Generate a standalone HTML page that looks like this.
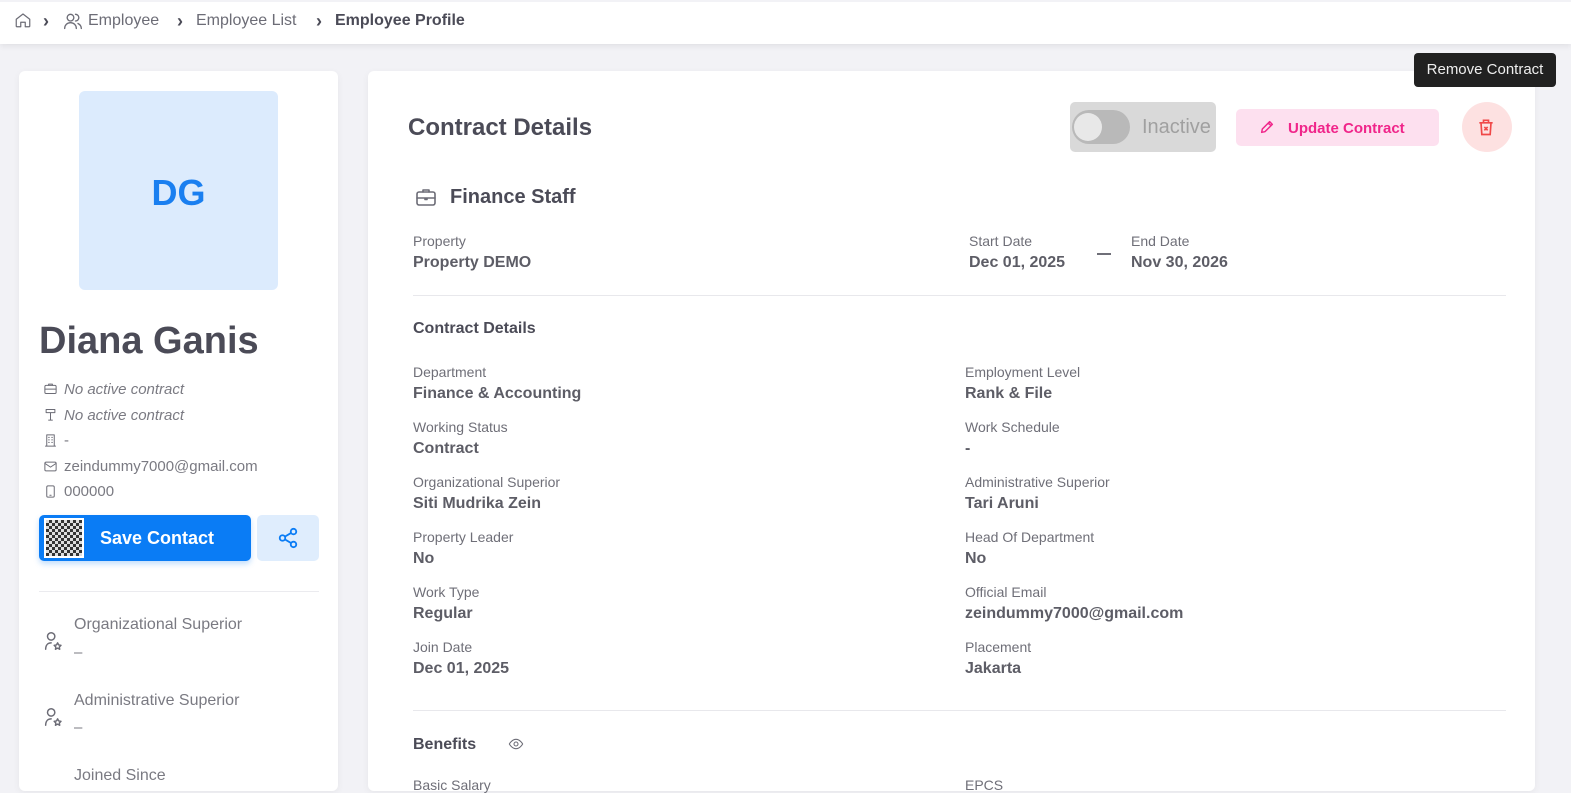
<!DOCTYPE html>
<html><head><meta charset="utf-8"><style>
*{box-sizing:border-box;margin:0;padding:0}
body{width:1571px;height:783px;overflow:hidden;background:#f2f2f6;font-family:"Liberation Sans",sans-serif;color:#4b4b57;position:relative}
.a{position:absolute}
.hdr{left:0;top:0;width:1571px;height:44px;background:#fff;box-shadow:0 2px 6px rgba(0,0,0,.08);border-top:2px solid #f2f2f6}
.bc{top:12px;font-size:16px;color:#6c6c76}
.chev{top:11px;font-size:18px;font-weight:bold;color:#4b4b57}
.card{background:#fff;border-radius:6px;box-shadow:0 2px 8px rgba(0,0,0,.05)}
.lbl{font-size:14px;color:#6f6f78;margin-top:2px}
.val{font-size:16px;font-weight:bold;color:#5d5d66;margin-top:2px}
.ic{stroke:#6c6c76;fill:none;stroke-width:1.6;stroke-linecap:round;stroke-linejoin:round}
.sm{font-size:15px;color:#7a7a82;margin-top:2px}
</style></head><body>
<div class="a hdr"></div>
<svg class="a" style="left:14px;top:11px" width="18" height="18" viewBox="0 0 24 24"><path class="ic" d="M3 11l9-7 9 7v9a1 1 0 0 1-1 1h-5v-6h-6v6H4a1 1 0 0 1-1-1z"/></svg>
<div class="a chev" style="left:43px">›</div>
<svg class="a" style="left:63px;top:11px" width="20" height="20" viewBox="0 0 24 24"><circle class="ic" cx="9" cy="8" r="4"/><path class="ic" d="M2 21c0-4 3-7 7-7s7 3 7 7M15 4a4 4 0 0 1 0 8M18 15c2 1 4 3 4 6"/></svg>
<div class="a bc" style="left:88px">Employee</div>
<div class="a chev" style="left:177px">›</div>
<div class="a bc" style="left:196px">Employee List</div>
<div class="a chev" style="left:316px">›</div>
<div class="a bc" style="left:335px;font-weight:bold;color:#4b4b57">Employee Profile</div>

<div class="a card" style="left:19px;top:71px;width:319px;height:720px"></div>
<div class="a" style="left:79px;top:91px;width:199px;height:199px;background:#dcebfd;border-radius:6px;color:#1a7ff0;font-size:36px;font-weight:bold;text-align:center;line-height:203px">DG</div>
<div class="a" style="left:39px;top:320px;font-size:38px;font-weight:bold;color:#4b4b57">Diana Ganis</div>
<svg class="a" style="left:43px;top:381px" width="15" height="15" viewBox="0 0 24 24"><rect class="ic" x="3" y="7" width="18" height="13" rx="2"/><path class="ic" d="M9 7V5h6v2M3 13h18"/></svg>
<div class="a sm" style="left:64px;top:379px;font-style:italic">No active contract</div>
<svg class="a" style="left:43px;top:407px" width="15" height="15" viewBox="0 0 24 24"><path class="ic" d="M5 4h14v5H5zM12 9v12M9 21h6"/></svg>
<div class="a sm" style="left:64px;top:405px;font-style:italic">No active contract</div>
<svg class="a" style="left:43px;top:433px" width="15" height="15" viewBox="0 0 24 24"><path class="ic" d="M6 21V3h12v18M4 21h16M9 7h1M14 7h1M9 11h1M14 11h1M9 15h1M14 15h1"/></svg>
<div class="a sm" style="left:64px;top:430px">-</div>
<svg class="a" style="left:43px;top:459px" width="15" height="15" viewBox="0 0 24 24"><rect class="ic" x="3" y="5" width="18" height="14" rx="2"/><path class="ic" d="M3 7l9 6 9-6"/></svg>
<div class="a sm" style="left:64px;top:456px">zeindummy7000@gmail.com</div>
<svg class="a" style="left:43px;top:484px" width="15" height="15" viewBox="0 0 24 24"><rect class="ic" x="6" y="3" width="12" height="18" rx="2"/><path class="ic" d="M11 18h2"/></svg>
<div class="a sm" style="left:64px;top:481px">000000</div>
<div class="a" style="left:39px;top:515px;width:212px;height:46px;background:#0a7cf5;border-radius:5px;box-shadow:0 3px 6px rgba(10,124,245,.25)"></div>
<div class="a" style="left:44px;top:518px;width:40px;height:40px;background:repeating-conic-gradient(#333 0 25%,#ddd 0 50%) 0 0/6px 6px;border:2px solid #fff"></div>
<div class="a" style="left:100px;top:528px;color:#fff;font-size:18px;font-weight:bold">Save Contact</div>
<div class="a" style="left:257px;top:515px;width:62px;height:46px;background:#dfedfd;border-radius:5px"></div>
<svg class="a" style="left:277px;top:527px" width="22" height="22" viewBox="0 0 24 24"><g stroke="#0a7cf5" stroke-width="2" fill="none"><circle cx="18" cy="5" r="3"/><circle cx="6" cy="12" r="3"/><circle cx="18" cy="19" r="3"/><path d="M8.6 13.5l6.8 4M15.4 6.5l-6.8 4"/></g></svg>
<div class="a" style="left:39px;top:591px;width:280px;height:1px;background:#ebebef"></div>
<svg class="a" style="left:42px;top:630px" width="22" height="22" viewBox="0 0 24 24"><circle class="ic" cx="10" cy="7" r="4"/><path class="ic" d="M4 21c0-4 2-7 6-7M17 14l1.2 2.3 2.5.4-1.8 1.8.4 2.5-2.3-1.2-2.3 1.2.4-2.5-1.8-1.8 2.5-.4z"/></svg>
<div class="a sm" style="left:74px;top:614px;font-size:16px">Organizational Superior</div>
<div class="a sm" style="left:74px;top:642px">–</div>
<svg class="a" style="left:42px;top:706px" width="22" height="22" viewBox="0 0 24 24"><circle class="ic" cx="10" cy="7" r="4"/><path class="ic" d="M4 21c0-4 2-7 6-7M17 14l1.2 2.3 2.5.4-1.8 1.8.4 2.5-2.3-1.2-2.3 1.2.4-2.5-1.8-1.8 2.5-.4z"/></svg>
<div class="a sm" style="left:74px;top:690px;font-size:16px">Administrative Superior</div>
<div class="a sm" style="left:74px;top:717px">–</div>
<div class="a sm" style="left:74px;top:765px;font-size:16px">Joined Since</div>

<div class="a card" style="left:368px;top:71px;width:1167px;height:720px"></div>
<div class="a" style="left:408px;top:114px;font-size:24px;font-weight:bold;color:#4b4b57">Contract Details</div>
<div class="a" style="left:1070px;top:102px;width:146px;height:50px;background:#d9d9d9;border-radius:5px"></div>
<div class="a" style="left:1072px;top:110px;width:58px;height:34px;background:#b9b9b9;border-radius:17px"></div>
<div class="a" style="left:1074px;top:113px;width:28px;height:28px;background:#e8e8e8;border-radius:50%"></div>
<div class="a" style="left:1142px;top:116px;font-size:20px;color:#a0a0a0">Inactive</div>
<div class="a" style="left:1236px;top:109px;width:203px;height:37px;background:#fde0ef;border-radius:5px"></div>
<svg class="a" style="left:1259px;top:119px" width="16" height="16" viewBox="0 0 24 24"><path d="M4 20l1-5L16 4l4 4L9 19zM14 6l4 4" stroke="#f0258a" stroke-width="2.2" fill="none" stroke-linejoin="round"/></svg>
<div class="a" style="left:1288px;top:120px;font-size:15px;font-weight:bold;color:#f0258a">Update Contract</div>
<div class="a" style="left:1462px;top:102px;width:50px;height:50px;background:#fde1e1;border-radius:50%"></div>
<svg class="a" style="left:1476px;top:116px" width="20" height="22" viewBox="0 0 24 24"><path d="M4 7h16M9 7V4h6v3M6 7l1 14h10l1-14M10 12l4 4M14 12l-4 4" stroke="#f04848" stroke-width="2" fill="none"/></svg>
<div class="a" style="left:1414px;top:53px;width:142px;height:34px;background:#212121;border-radius:4px;color:#eee;font-size:15px;line-height:34px;text-align:center">Remove Contract</div>

<svg class="a" style="left:414px;top:185px" width="24" height="24" viewBox="0 0 24 24"><rect class="ic" x="3" y="7" width="18" height="13" rx="2"/><path class="ic" d="M9 7V5h6v2M3 13h18M11 13v1.5h2V13"/></svg>
<div class="a" style="left:450px;top:186px;font-size:20px;font-weight:bold;color:#4b4b57">Finance Staff</div>
<div class="a lbl" style="left:413px;top:231px">Property</div>
<div class="a val" style="left:413px;top:252px">Property DEMO</div>
<div class="a lbl" style="left:969px;top:231px">Start Date</div>
<div class="a val" style="left:969px;top:252px">Dec 01, 2025</div>
<div class="a" style="left:1097px;top:253px;width:14px;height:1.5px;background:#6f6f78"></div>
<div class="a lbl" style="left:1131px;top:231px">End Date</div>
<div class="a val" style="left:1131px;top:252px">Nov 30, 2026</div>
<div class="a" style="left:413px;top:295px;width:1093px;height:1px;background:#e8e8ec"></div>
<div class="a" style="left:413px;top:320px;font-size:16px;font-weight:bold;color:#4b4b57">Contract Details</div>

<div class="a lbl" style="left:413px;top:362px">Department</div><div class="a val" style="left:413px;top:383px">Finance &amp; Accounting</div>
<div class="a lbl" style="left:965px;top:362px">Employment Level</div><div class="a val" style="left:965px;top:383px">Rank &amp; File</div>
<div class="a lbl" style="left:413px;top:417px">Working Status</div><div class="a val" style="left:413px;top:438px">Contract</div>
<div class="a lbl" style="left:965px;top:417px">Work Schedule</div><div class="a val" style="left:965px;top:438px">-</div>
<div class="a lbl" style="left:413px;top:472px">Organizational Superior</div><div class="a val" style="left:413px;top:493px">Siti Mudrika Zein</div>
<div class="a lbl" style="left:965px;top:472px">Administrative Superior</div><div class="a val" style="left:965px;top:493px">Tari Aruni</div>
<div class="a lbl" style="left:413px;top:527px">Property Leader</div><div class="a val" style="left:413px;top:548px">No</div>
<div class="a lbl" style="left:965px;top:527px">Head Of Department</div><div class="a val" style="left:965px;top:548px">No</div>
<div class="a lbl" style="left:413px;top:582px">Work Type</div><div class="a val" style="left:413px;top:603px">Regular</div>
<div class="a lbl" style="left:965px;top:582px">Official Email</div><div class="a val" style="left:965px;top:603px">zeindummy7000@gmail.com</div>
<div class="a lbl" style="left:413px;top:637px">Join Date</div><div class="a val" style="left:413px;top:658px">Dec 01, 2025</div>
<div class="a lbl" style="left:965px;top:637px">Placement</div><div class="a val" style="left:965px;top:658px">Jakarta</div>
<div class="a" style="left:413px;top:710px;width:1093px;height:1px;background:#e8e8ec"></div>
<div class="a" style="left:413px;top:736px;font-size:16px;font-weight:bold;color:#4b4b57">Benefits</div>
<svg class="a" style="left:507px;top:736px" width="18" height="16" viewBox="0 0 24 24"><path class="ic" d="M2 12s4-7 10-7 10 7 10 7-4 7-10 7S2 12 2 12z"/><circle class="ic" cx="12" cy="12" r="3"/></svg>
<div class="a lbl" style="left:413px;top:775px">Basic Salary</div>
<div class="a lbl" style="left:965px;top:775px">EPCS</div>
</body></html>
